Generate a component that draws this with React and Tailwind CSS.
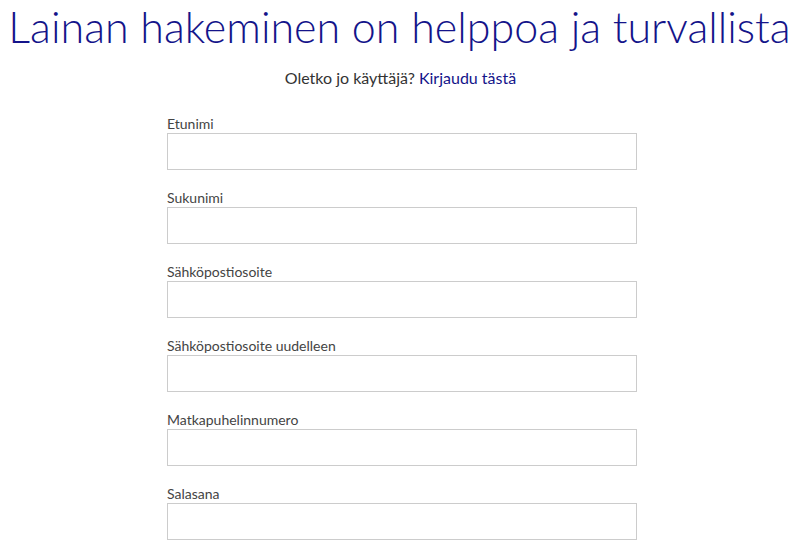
import React from "react";

const fields = [
  "Etunimi",
  "Sukunimi",
  "Sähköpostiosoite",
  "Sähköpostiosoite uudelleen",
  "Matkapuhelinnumero",
  "Salasana",
];

export default function App() {
  return (
    <div className="min-h-[548px] bg-white font-['Lato','Open_Sans',sans-serif] overflow-hidden">
      <h1 className="text-center text-[43px] leading-[52px] font-light text-[#14148a] pt-[1px] whitespace-nowrap">
        Lainan hakeminen on helppoa ja turvallista
      </h1>
      <p className="text-center text-[16px] leading-[20px] text-[#333] mt-[15px] pl-[2px]">
        Oletko jo käyttäjä?{" "}
        <a href="#" className="text-[#14148a]">
          Kirjaudu tästä
        </a>
      </p>
      <form className="ml-[167px] w-[470px] mt-[27px] flex flex-col gap-[19px]">
        {fields.map((label) => (
          <div key={label} className="flex flex-col">
            <label className="text-[14px] leading-[17px] text-[#444] mb-[1px]">{label}</label>
            <input
              type={label === "Salasana" ? "password" : "text"}
              className="h-[37px] w-full border border-[#ccc] bg-white outline-none"
            />
          </div>
        ))}
      </form>
    </div>
  );
}
